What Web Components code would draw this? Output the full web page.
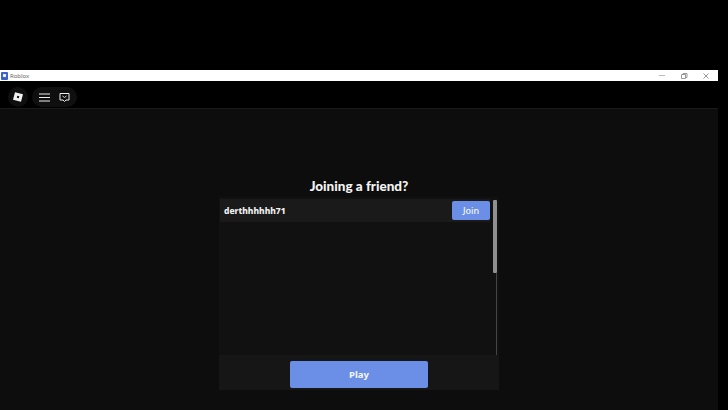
<!DOCTYPE html>
<html>
<head>
<meta charset="utf-8">
<title>Roblox</title>
<style>
  html, body { margin: 0; height: 100%; background: #000; overflow: hidden; }
  body { font-family: "Noto Sans", sans-serif; }
</style>
</head>
<body>
<app-window>
  <join-panel>
    <friend-row name="derthhhhhh71"></friend-row>
  </join-panel>
</app-window>

<script>
class TitleBar extends HTMLElement {
  constructor() {
    super();
    this.attachShadow({ mode: 'open' });
    this.shadowRoot.innerHTML = `
      <style>
        :host {
          display: flex;
          align-items: center;
          height: 11px;
          background: #fff;
          color: #666;
          font-size: 6px;
        }
        .logo {
          width: 7px; height: 8px; margin: 0 2px 0 1px;
          background: #3a62c8; border-radius: 1px;
          display: flex; align-items: center; justify-content: center;
        }
        .logo i { width: 3px; height: 3px; background: #fff; transform: rotate(15deg); }
        .name { flex: 1; }
        svg { display: block; }
        .btns { display: flex; gap: 14px; margin-right: 8px; }
      </style>
      <div class="logo"><i></i></div>
      <span class="name">Roblox</span>
      <div class="btns">
        <svg width="8" height="8" viewBox="0 0 8 8" stroke="#bbb" fill="none"><path d="M1 3.500h6"/></svg>
        <svg width="8" height="8" viewBox="0 0 8 8" stroke="#999" fill="none"><path d="M1.500 2.500h4v4h-4zM3 2.500v-1h4v4h-1"/></svg>
        <svg width="8" height="8" viewBox="0 0 8 8" stroke="#999" fill="none"><path d="M1.500 1.500l5 5M6.500 1.500l-5 5"/></svg>
      </div>
    `;
  }
}

class TopBar extends HTMLElement {
  constructor() {
    super();
    this.attachShadow({ mode: 'open' });
    this.shadowRoot.innerHTML = `
      <style>
        :host {
          display: flex;
          align-items: center;
          gap: 4px;
          height: 28px;
          box-sizing: border-box;
          padding: 5px 0 0 8px;
          background: #000;
          border-bottom: 1px solid #1a1a1a;
        }
        .pill {
          display: flex; align-items: center; justify-content: center;
          height: 20px; background: #0f0f0f; border-radius: 10px;
        }
        .home { width: 20px; }
        .menu { width: 45px; gap: 9px; }
        svg { display: block; }
      </style>
      <div class="pill home">
        <svg width="12" height="12" viewBox="0 0 12 12"><path fill="#f2f2f2" fill-rule="evenodd" d="M3 1.200l8 2-2 7.600-8-2zM5.300 4.700l-.5 2 2 .5.5-2z"/></svg>
      </div>
      <div class="pill menu">
        <svg width="11" height="9" viewBox="0 0 11 9" stroke="#eee" fill="none"><path d="M0 1h11M0 4.500h11M0 8h11"/></svg>
        <svg width="11" height="11" viewBox="0 0 11 11" stroke="#eee" fill="none"><path d="M1 1.500h9v6.500H7L5.500 9.500 4 8H1z"/><path d="M3.500 4l2 1.500 2-1.500" stroke-width=".9"/></svg>
      </div>
    `;
  }
}

class AppWindow extends HTMLElement {
  constructor() {
    super();
    this.attachShadow({ mode: 'open' });
    this.shadowRoot.innerHTML = `
      <style>
        :host {
          display: flex;
          flex-direction: column;
          width: 718px;
          height: 340px;
          margin-top: 70px;
        }
        main {
          flex: 1;
          display: flex;
          justify-content: center;
          background: #0d0d0d;
        }
      </style>
      <title-bar></title-bar>
      <top-bar></top-bar>
      <main><slot></slot></main>
    `;
  }
}

class JoinPanel extends HTMLElement {
  constructor() {
    super();
    this.attachShadow({ mode: 'open' });
    this.shadowRoot.innerHTML = `
      <style>
        :host {
          display: flex;
          flex-direction: column;
          width: 280px;
          margin-top: 67px;
          color: #fff;
        }
        h1 {
          margin: 0;
          height: 21px;
          text-align: center;
          font: 900 13.500px/20px Lato, sans-serif;
          color: #f4f4f4;
        }
        .list {
          display: flex;
          height: 158px;
          box-sizing: border-box;
          padding: 2px 2px 0 1px;
          background: #111;
        }
        .rows { flex: 1; min-width: 0; }
        .scroll {
          display: flex;
          flex-direction: column;
          align-items: flex-end;
          width: 4px;
          margin: 1px 0 0 3px;
        }
        .thumb {
          flex: none;
          width: 4px;
          height: 73px;
          background: #8f8f8f;
          border-radius: 1px;
        }
        .track {
          flex: 1;
          width: 1px;
          background: #444;
        }
        .footer {
          display: flex;
          justify-content: center;
          height: 35px;
          box-sizing: border-box;
          padding-top: 6px;
          background: #161616;
        }
        button {
          width: 138px;
          height: 27px;
          border: 0;
          padding: 0;
          border-radius: 2px;
          background: #6b8fe6;
          color: #f4f6fc;
          font: 700 9.500px "Noto Sans", sans-serif;
        }
      </style>
      <h1>Joining a friend?</h1>
      <div class="list">
        <div class="rows"><slot></slot></div>
        <div class="scroll"><div class="thumb"></div><div class="track"></div></div>
      </div>
      <div class="footer"><button>Play</button></div>
    `;
  }
}

class FriendRow extends HTMLElement {
  constructor() {
    super();
    this.attachShadow({ mode: 'open' });
    this.shadowRoot.innerHTML = `
      <style>
        :host {
          display: flex;
          align-items: flex-start;
          justify-content: space-between;
          height: 23px;
          box-sizing: border-box;
          padding: 2px 0 0 4px;
          background: #1a1a1a;
          font-size: 8.500px;
          font-weight: 800;
          color: #f0f0f0;
        }
        span { line-height: 19px; }
        button {
          width: 38px;
          height: 19px;
          border: 0;
          padding: 0;
          border-radius: 2px;
          background: #6b8fe6;
          color: #f4f6fc;
          font: 500 9px "Noto Sans", sans-serif;
        }
      </style>
      <span id="name"></span>
      <button>Join</button>
    `;
    this.shadowRoot.getElementById('name').textContent = this.getAttribute('name') || '';
  }
}

customElements.define('title-bar', TitleBar);
customElements.define('top-bar', TopBar);
customElements.define('app-window', AppWindow);
customElements.define('join-panel', JoinPanel);
customElements.define('friend-row', FriendRow);
</script>
</body>
</html>
